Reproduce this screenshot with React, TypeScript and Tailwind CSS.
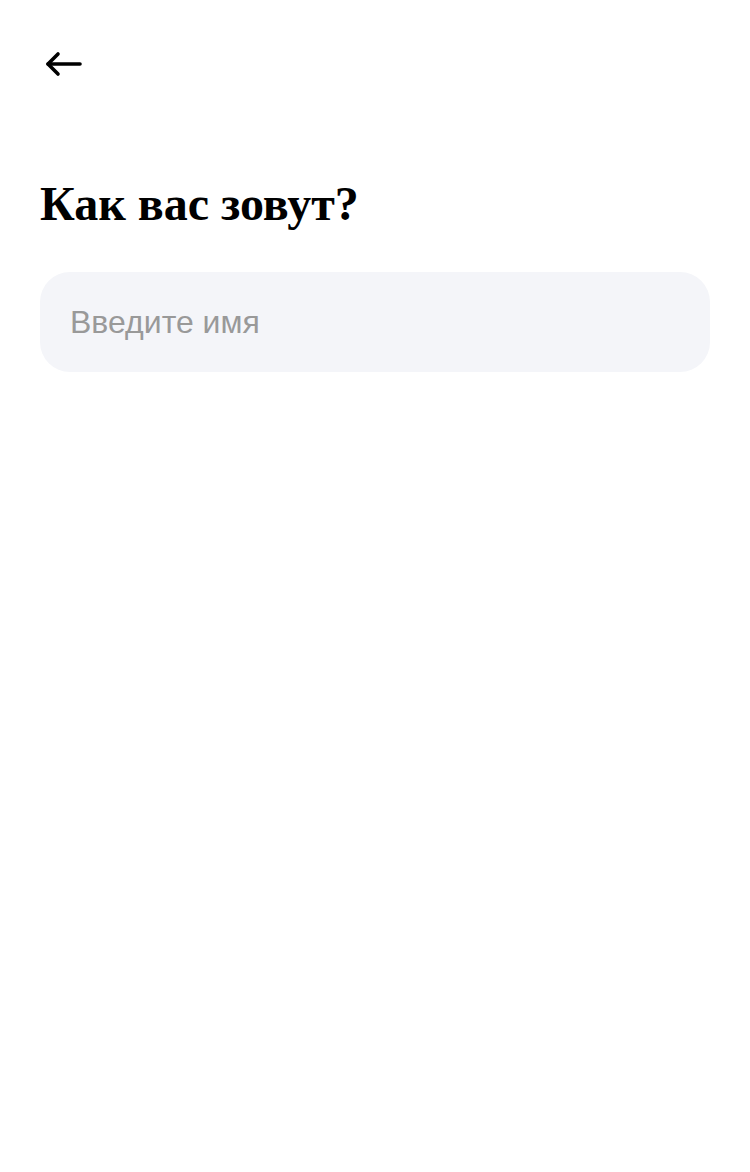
export default function App() {
  return (
    <div className="min-h-[1172px] bg-white px-10 pt-[50px]">
      <button className="flex h-7 w-11 items-center text-black" aria-label="Назад">
        <svg width="44" height="28" viewBox="0 0 44 28" fill="none" stroke="currentColor" strokeWidth="3.6" strokeLinecap="round" strokeLinejoin="round">
          <path d="M8 14h32" />
          <path d="M18 4 8 14l10 10" />
        </svg>
      </button>
      <h1 className="mt-[102px] text-[48px] font-bold leading-none text-black" style={{ fontFamily: '"Liberation Serif", serif' }}>
        Как вас зовут?
      </h1>
      <input
        type="text"
        placeholder="Введите имя"
        className="mt-[44px] h-[100px] w-full rounded-[30px] bg-[#f4f5f9] px-[30px] text-[32px] text-black outline-none placeholder:text-[#999999]"
        style={{ fontFamily: '"Liberation Sans", Arial, sans-serif' }}
      />
    </div>
  );
}
